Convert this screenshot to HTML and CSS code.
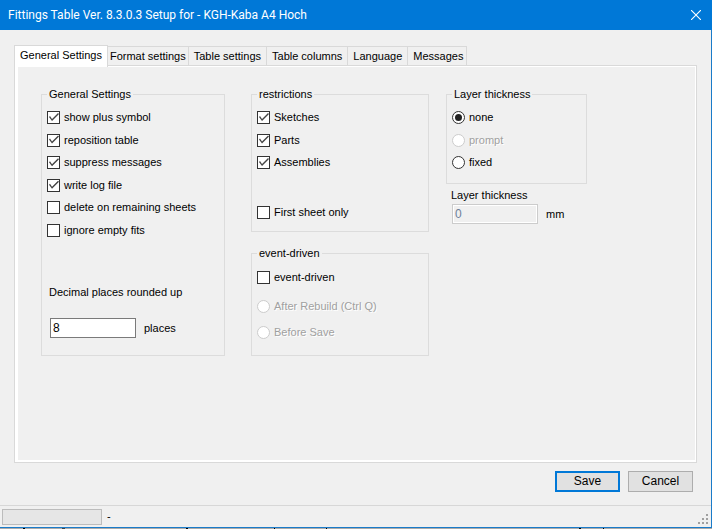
FILE: index.html
```html
<!DOCTYPE html>
<html lang="en">
<head>
<meta charset="utf-8">
<meta name="viewport" content="width=device-width, initial-scale=1">
<title>Fittings Table Setup</title>
<link rel="stylesheet" href="styles.css">
</head>
<body>
<div class="window">
  <header class="titlebar">
    <h1 class="title">Fittings Table Ver. 8.3.0.3 Setup for - KGH-Kaba A4 Hoch</h1>
    <button class="close" type="button" aria-label="Close">
      <svg width="10" height="10" viewBox="0 0 10 10"><path d="M0 0L10 10M10 0L0 10" stroke="#fff" stroke-width="1.1" fill="none"/></svg>
    </button>
  </header>

  <form class="content">
    <div class="tabs" role="tablist">
      <button class="tab tab-active" type="button" role="tab" aria-selected="true">General Settings</button>
      <button class="tab" type="button" role="tab">Format settings</button>
      <button class="tab" type="button" role="tab">Table settings</button>
      <button class="tab" type="button" role="tab">Table columns</button>
      <button class="tab" type="button" role="tab">Language</button>
      <button class="tab" type="button" role="tab">Messages</button>
    </div>

    <div class="panel" role="tabpanel">
      <div class="column column-general">
        <fieldset class="group group-general">
          <legend>General Settings</legend>
          <div class="options options-six">
            <label class="option"><input type="checkbox" checked>show plus symbol</label>
            <label class="option"><input type="checkbox" checked>reposition table</label>
            <label class="option"><input type="checkbox" checked>suppress messages</label>
            <label class="option"><input type="checkbox" checked>write log file</label>
            <label class="option"><input type="checkbox">delete on remaining sheets</label>
            <label class="option"><input type="checkbox">ignore empty fits</label>
          </div>
          <label class="caption caption-decimals" for="decimals">Decimal places rounded up</label>
          <div class="field field-decimals"><input class="text" id="decimals" type="text" value="8"><span>places</span></div>
        </fieldset>
      </div>

      <div class="column">
        <fieldset class="group group-restrictions">
          <legend>restrictions</legend>
          <div class="options">
            <label class="option"><input type="checkbox" checked>Sketches</label>
            <label class="option"><input type="checkbox" checked>Parts</label>
            <label class="option"><input type="checkbox" checked>Assemblies</label>
          </div>
          <label class="option option-apart"><input type="checkbox">First sheet only</label>
        </fieldset>
        <fieldset class="group group-event">
          <legend>event-driven</legend>
          <label class="option"><input type="checkbox">event-driven</label>
          <div class="triggers">
            <label class="option option-off"><input type="radio" name="trigger" disabled>After Rebuild (Ctrl Q)</label>
            <label class="option option-off"><input type="radio" name="trigger" disabled>Before Save</label>
          </div>
        </fieldset>
      </div>

      <div class="column">
        <fieldset class="group group-thickness">
          <legend>Layer thickness</legend>
          <div class="options">
            <label class="option"><input type="radio" name="thickness" checked>none</label>
            <label class="option option-off"><input type="radio" name="thickness" disabled>prompt</label>
            <label class="option"><input type="radio" name="thickness">fixed</label>
          </div>
        </fieldset>
        <label class="caption caption-layer" for="layer">Layer thickness</label>
        <div class="field field-layer"><input class="text" id="layer" type="text" value="0" disabled><span>mm</span></div>
      </div>
    </div>

    <div class="actions">
      <button class="button button-default" type="submit">Save</button>
      <button class="button" type="button">Cancel</button>
    </div>
  </form>

  <footer class="status">
    <div class="progress" role="progressbar" aria-label="Progress" aria-valuenow="0"></div>
    <span class="status-text">-</span>
    <svg class="grip" width="10" height="10" viewBox="0 0 10 10" fill="#a0a0a0"><path d="M8 0h2v2h-2zM4 4h2v2h-2zM8 4h2v2h-2zM0 8h2v2h-2zM4 8h2v2h-2zM8 8h2v2h-2z"/></svg>
  </footer>
</div>
</body>
</html>
```
FILE: styles.css
```css
* {
  box-sizing: border-box;
}

body {
  margin: 0;
  min-height: 100vh;
  display: flex;
  flex-direction: column;
  padding-bottom: 1px;
  background:
    linear-gradient(#000, #000) 23px 100% / 2px 1px no-repeat,
    linear-gradient(#444, #444) 62px 100% / 3px 1px no-repeat,
    linear-gradient(#000, #000) 186px 100% / 2px 1px no-repeat,
    linear-gradient(#000, #000) 274px 100% / 1px 1px no-repeat,
    linear-gradient(#000, #000) 326px 100% / 1px 1px no-repeat,
    linear-gradient(#000, #000) 579px 100% / 2px 1px no-repeat,
    linear-gradient(#000, #000) 603px 100% / 1px 1px no-repeat,
    #aaa;
  color: #000;
  font-family: "Liberation Sans", Arial, sans-serif;
  font-size: 11px;
  line-height: 13px;
}

button,
input {
  margin: 0;
  font: inherit;
  color: inherit;
}

.window {
  flex: 1;
  display: flex;
  flex-direction: column;
  background: #f0f0f0;
  border: 0 solid #1a7bc9;
  border-width: 0 1px 1px 0;
}

.titlebar {
  display: flex;
  align-items: center;
  justify-content: space-between;
  height: 30px;
  margin-right: -1px;
  padding: 0 11px 0 8px;
  background: #0078d7;
  color: #fff;
}

.title {
  margin: 0;
  font: 12px/16px Roboto, "Segoe UI", sans-serif;
}

.close {
  display: flex;
  padding: 0;
  border: 0;
  background: none;
}

.content {
  flex: 1;
  display: flex;
  flex-direction: column;
  padding: 15px 14px 13px;
}

.tabs {
  display: flex;
  align-items: flex-end;
}

.tab {
  height: 19px;
  margin-left: -1px;
  padding: 1px 2px 0;
  border: 1px solid #d9d9d9;
  border-bottom: 0;
  background: #f0f0f0;
  white-space: nowrap;
}

.tab:nth-child(n + 3) {
  padding: 1px 5px 0;
}

.tab:last-child {
  padding: 1px 3px 0 5px;
}

.tab-active {
  position: relative;
  height: 22px;
  margin: 0 0 -2px;
  padding: 0 5px 2px;
  background: #fff;
}

.panel {
  flex: 1;
  display: grid;
  grid-template-columns: 193fr 178fr 141fr;
  column-gap: 17px;
  align-items: start;
  padding: 22px 109px 20px 26px;
  border: 1px solid #d9d9d9;
  box-shadow: inset 3px 0 #fff, inset -1px 1px #fff, inset 0 -2px #fff;
}

.column {
  display: flex;
  flex-direction: column;
  min-width: 0;
}

.column-general {
  margin-right: 9px;
}

.group {
  min-width: 0;
  margin: 0;
  padding: 8px 5px 10px;
  border: 1px solid #dcdcdc;
}

.group legend {
  margin-left: 0;
  padding: 0 2px;
  line-height: 13px;
}

.group-general {
  padding-bottom: 17px;
}

.group-event {
  margin-top: 15px;
  padding-top: 9px;
  padding-bottom: 14px;
}

.group-thickness {
  padding-bottom: 12px;
}

.options {
  display: flex;
  flex-direction: column;
  justify-content: space-between;
  height: 62px;
}

.options-six {
  height: 130px;
}

.option {
  display: flex;
  align-items: center;
  gap: 4px;
  height: 17px;
  white-space: nowrap;
}

.option-apart {
  margin-top: 33px;
}

.option-off {
  color: #a0a0a0;
  text-shadow: 1px 1px #fff;
}

.triggers {
  display: grid;
  gap: 9px;
  margin-top: 12px;
}

.option input {
  appearance: none;
  display: grid;
  flex: none;
  width: 13px;
  height: 13px;
  border: 1px solid #333;
  background: #fff;
}

.option input[type="radio"] {
  border-radius: 50%;
  place-content: center;
}

.option input:disabled {
  border-color: #ccc;
}

.option input[type="checkbox"]:checked::before {
  content: "";
  background: #444;
  clip-path: polygon(1px 5px, 2px 4px, 4px 7px, 10px 1px, 11px 2px, 4px 9px);
}

.option input[type="radio"]:checked::before {
  content: "";
  width: 7px;
  height: 7px;
  border-radius: 50%;
  background: #222;
}

.caption {
  display: block;
  line-height: 15px;
}

.caption-decimals {
  margin: 46px 0 0 2px;
}

.caption-layer {
  margin: 4px 0 0 5px;
}

.field {
  display: flex;
  align-items: center;
  gap: 8px;
}

.field-decimals {
  margin: 18px 0 0 3px;
}

.field-layer {
  margin: 1px 0 0 6px;
}

.text {
  width: 86px;
  height: 20px;
  padding: 0 2px;
  border: 1px solid #7a7a7a;
  background: #fff;
  font-size: 12px;
}

.text:disabled {
  border-color: #ccc;
  background: #f0f0f0;
  color: #6d7f99;
  box-shadow: inset 0 0 0 1px #fff;
}

.actions {
  display: flex;
  justify-content: flex-end;
  gap: 8px;
  margin-top: 8px;
  padding-right: 4px;
}

.button {
  width: 65px;
  height: 21px;
  padding: 0;
  border: 1px solid #adadad;
  background: #e1e1e1;
  font-size: 12px;
}

.button-default {
  border: 2px solid #0078d7;
}

.status {
  display: flex;
  align-items: center;
  gap: 5px;
  height: 22px;
  padding: 0 3px 0 2px;
  border-top: 1px solid #d7d7d7;
}

.progress {
  width: 100px;
  height: 16px;
  border: 1px solid #bcbcbc;
  background: #e6e6e6;
}

.grip {
  align-self: flex-end;
  margin: 0 0 3px auto;
}
```
